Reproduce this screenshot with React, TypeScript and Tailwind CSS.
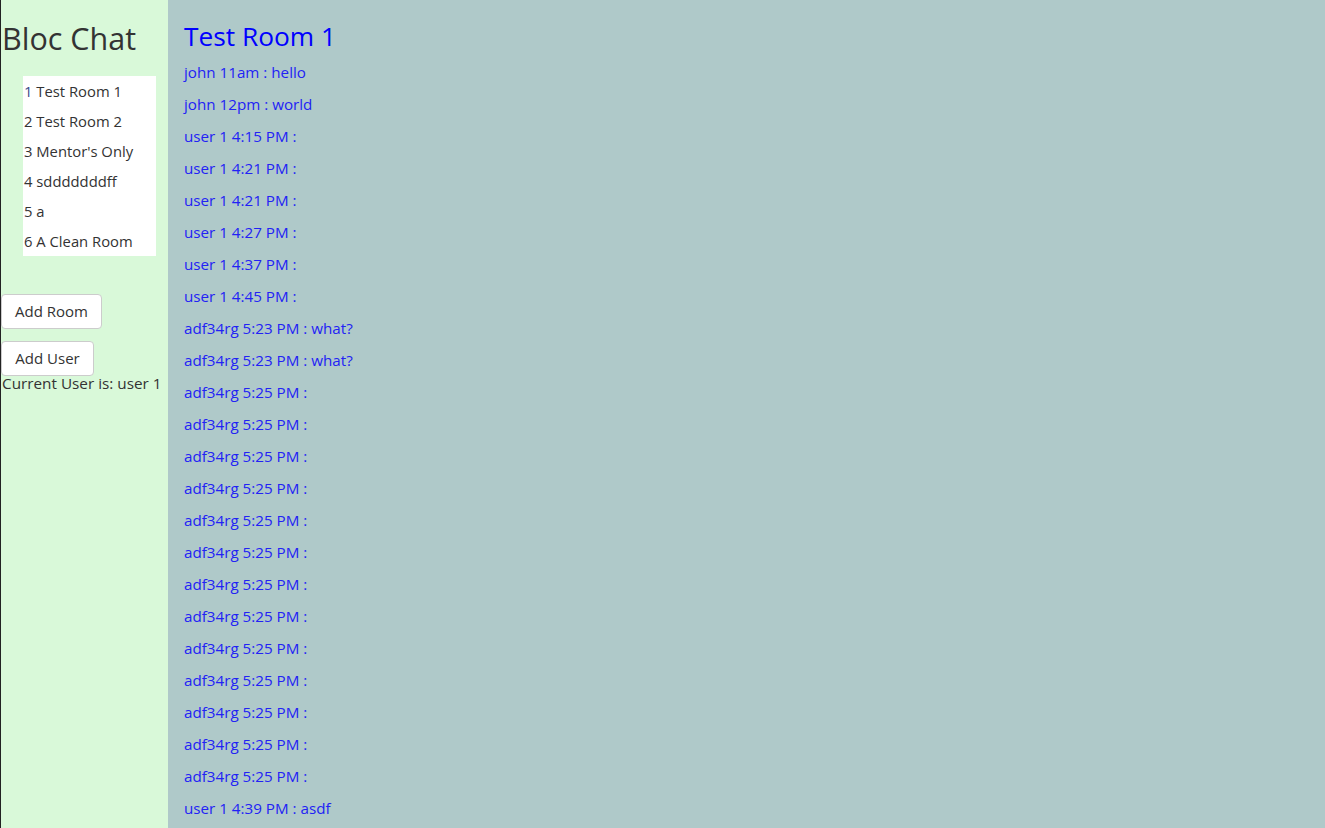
import React from "react";

const rooms = ["Test Room 1", "Test Room 2", "Mentor's Only", "sdddddddff", "a", "A Clean Room"];

const messages = [
  "john 11am : hello",
  "john 12pm : world",
  "user 1 4:15 PM :",
  "user 1 4:21 PM :",
  "user 1 4:21 PM :",
  "user 1 4:27 PM :",
  "user 1 4:37 PM :",
  "user 1 4:45 PM :",
  "adf34rg 5:23 PM : what?",
  "adf34rg 5:23 PM : what?",
  ...Array(13).fill("adf34rg 5:25 PM :"),
  "user 1 4:39 PM : asdf",
];

export default function App() {
  return (
    <div
      className="flex min-h-[828px] w-full text-[15px] text-[#333]"
      style={{ fontFamily: '"Open Sans", "Liberation Sans", sans-serif' }}
    >
      {/* sidebar */}
      <div className="w-[168px] shrink-0 border-l border-[#222] bg-[#d9f9d9]">
        <h1 className="mt-[18px] pl-px text-[30.5px] leading-[40px] font-normal">Bloc Chat</h1>
        <ul className="mt-[18px] ml-[22px] w-[133px] bg-white pl-px text-[14.8px]">
          {rooms.map((r, i) => (
            <li key={i} className="h-[30px] leading-[30px]">
              <span className={i === 0 ? "text-[#3a4a8a]" : ""}>{i + 1}</span> {r}
            </li>
          ))}
        </ul>
        <div className="mt-[38px] flex flex-col items-start gap-3">
          <button className="h-[35px] w-[101px] rounded border border-[#ccc] bg-white text-[15px] text-[#333]">
            Add Room
          </button>
          <button className="h-[35px] w-[93px] rounded border border-[#ccc] bg-white text-[15px] text-[#333]">
            Add User
          </button>
        </div>
        <div className="pl-px text-[15.3px] leading-[14px]">Current User is: user 1</div>
      </div>

      {/* main */}
      <div className="flex-1 bg-[#afc9c9] px-4">
        <h2 className="mt-[17px] text-[26.3px] leading-[39px] font-normal text-[#0000ff]">Test Room 1</h2>
        {messages.map((m, i) => (
          <div key={i} className="h-8 text-[15.2px] leading-8 text-[#2222f5]">
            {m}
          </div>
        ))}
      </div>
    </div>
  );
}
